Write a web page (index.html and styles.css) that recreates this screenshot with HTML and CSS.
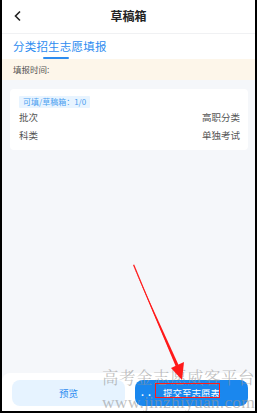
FILE: index.html
```html
<!DOCTYPE html>
<html lang="zh">
<head>
<meta charset="utf-8">
<link rel="stylesheet" href="styles.css">
</head>
<body>
<div class="frame">
  <header class="nav">
    <svg class="back" width="10" height="12" viewBox="0 0 10 12"><path d="M7 1.5 L2.5 6 L7 10.5" fill="none" stroke="#222" stroke-width="1.6"/></svg>
    <div class="title">草稿箱</div>
  </header>
  <div class="tabs">
    <div class="tab">分类招生志愿填报</div>
    <div class="tab-line"></div>
  </div>
  <div class="notice">填报时间:</div>
  <main class="content">
    <div class="card">
      <div class="badge">可填/草稿箱：1/0</div>
      <div class="row"><span>批次</span><span>高职分类</span></div>
      <div class="row"><span>科类</span><span>单独考试</span></div>
    </div>
  </main>
  <footer class="bar">
    <div class="btn light">预览</div>
    <div class="btn solid">提交至志愿表</div>
  </footer>
  <div class="dots">. .</div>
  <div class="wm wm1">高考金志愿威客平台</div>
  <div class="wm wm2">www.jinzhiyuan.com</div>
  <div class="redbox"></div>
  <svg class="arrow" width="257" height="413" viewBox="0 0 257 413">
    <path d="M133 265 L176 367 L179 366 Z" fill="#ff1a1a"/>
    <path d="M133 265 L177 368 L134.2 264.5 Z" fill="#ff1a1a"/>
    <path d="M182 380 L171 368 L184 362 Z" fill="#ff1a1a"/>
  </svg>
</div>
</body>
</html>
```
FILE: styles.css
```css
html, body { margin: 0; padding: 0; background: #000; }
body { width: 257px; height: 413px; overflow: hidden; font-family: "Noto Sans CJK SC", "Noto Sans", sans-serif; }
.frame {
  position: relative;
  width: 253px; height: 411px;
  margin-left: 2px;
  background: #f5f7fa;
  display: flex; flex-direction: column;
  overflow: hidden;
}
.nav {
  height: 33px; background: #fff; border-bottom: 1px solid #f0f1f3;
  display: flex; align-items: center; justify-content: center; position: relative;
}
.back { position: absolute; left: 11px; top: 10px; }
.title { font-size: 12px; font-weight: 700; color: #222; margin-top: -3px; }
.tabs { height: 25px; background: #fff; position: relative; }
.tab { font-size: 11.5px; color: #2d8cf0; padding-left: 11px; line-height: 24px; letter-spacing: 0.2px; }
.tab-line { position: absolute; left: 41px; top: 23px; width: 26px; height: 2px; border-radius: 1px; background: #2d8cf0; }
.notice { height: 21px; background: #fdf6ea; font-size: 8.5px; color: #555; padding-left: 11px; line-height: 21px; }
.content { flex: 1; padding: 9px 7px 0 8px; }
.card { background: #fff; border-radius: 4px; padding: 7px 8px 0 9px; height: 54px; display: flex; flex-direction: column; }
.badge { align-self: flex-start; background: #e8f4ff; color: #4a9ff0; font-size: 8px; line-height: 12px; padding: 0 4px; border-radius: 1px; }
.row { display: flex; justify-content: space-between; font-size: 9.5px; color: #555; line-height: 18px; }
.row:first-of-type { margin-top: 3px; }
.bar { height: 38px; background: #fff; border-radius: 8px 8px 0 0; display: flex; gap: 10px; padding: 7px 7px 0 10px; box-sizing: border-box; }
.btn { flex: 1; height: 26px; border-radius: 8px; display: flex; align-items: center; justify-content: center; font-size: 9.5px; }
.light { background: #e6f3ff; color: #2d8cf0; }
.solid { background: #1a87ee; color: #fff; }
.dots { position: absolute; left: 139px; top: 388px; color: #fff; font-size: 9px; font-weight: 700; letter-spacing: 1px; line-height: 10px; }
.wm { position: absolute; font-family: "Liberation Serif", "Noto Serif CJK SC", serif; color: rgba(150,150,150,0.6); white-space: nowrap; line-height: 1; }
.wm1 { left: 100px; top: 371px; font-size: 16.5px; letter-spacing: 0.5px; }
.wm2 { left: 100px; top: 394px; font-size: 17.5px; letter-spacing: 0.2px; }
.redbox { position: absolute; left: 153px; top: 383px; width: 63px; height: 13px; border: 1.5px solid #ff1a1a; }
.arrow { position: absolute; left: -2px; top: 0; pointer-events: none; }
```
